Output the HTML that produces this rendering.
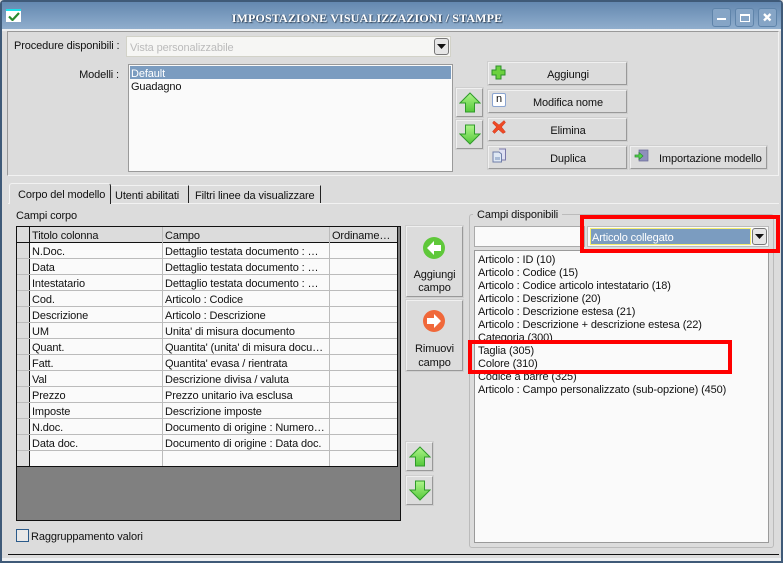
<!DOCTYPE html>
<html><head><meta charset="utf-8"><style>
html,body{margin:0;padding:0;width:783px;height:563px;overflow:hidden;background:#dcdcdc}
*{box-sizing:border-box}
#w{position:absolute;left:0;top:0;width:783px;height:563px;font:11px "Liberation Sans",sans-serif;color:#111;overflow:hidden}
#w div,#w svg{position:absolute}
.t{white-space:nowrap;line-height:13px;letter-spacing:-.12px}
.btn{background:#dcdcdc;border:1px solid;border-color:#f0f0f0 #999 #999 #f0f0f0;box-shadow:0 0 0 1px #cfcfcf}
.c{text-align:center}
.r{text-align:right}
.red{border:4px solid #f00}
.b{padding:6px 0 0 21px}
</style></head><body><div id="w">
<div style="left:0;top:0;width:783px;height:563px;background:#dcdcdc;border:2px solid #3f5a78;border-radius:4px 4px 0 0"></div>
<div style="left:2px;top:2px;width:779px;height:27px;background:linear-gradient(#6488b0,#90aecd)"></div>
<div style="left:2px;top:29px;width:779px;height:2px;background:#eef0f2"></div>
<div style="left:2px;top:558px;width:779px;height:3px;background:#eef0f2"></div>
<div style="left:6px;top:9px;width:15px;height:13px;background:#fff;border-top:2px solid #1ce0e8"></div>
<svg style="left:8px;top:12px" width="12" height="9" viewBox="0 0 12 9"><path d="M1 4.500L4.500 8L11 1" fill="none" stroke="#2a8a30" stroke-width="2.200"/></svg>
<div class="t c" style="left:0;top:11px;width:734px;font:bold 12px 'Liberation Serif',serif;color:#fff;text-shadow:1px 1px 1px #33465c,-1px 0 1px #55708e;letter-spacing:.15px">IMPOSTAZIONE VISUALIZZAZIONI / STAMPE</div>
<div style="left:712px;top:8px;width:19px;height:19px;border:1px solid #5f84aa;background:#86a5c6;border-radius:3px"></div>
<div style="left:735px;top:8px;width:19px;height:19px;border:1px solid #5f84aa;background:#86a5c6;border-radius:3px"></div>
<div style="left:758px;top:8px;width:19px;height:19px;border:1px solid #5f84aa;background:#86a5c6;border-radius:3px"></div>
<div style="left:717px;top:18px;width:9px;height:2px;background:#fff"></div>
<div style="left:740px;top:14px;width:10px;height:8px;border:1px solid #fff;border-top-width:2px"></div>
<svg style="left:762px;top:12px" width="11" height="11" viewBox="0 0 11 11"><path d="M2 2L8.500 8.500M8.500 2L2 8.500" stroke="#fff" stroke-width="2.300"/></svg>

<div style="left:7px;top:31px;width:772px;height:145px;border:1px solid;border-color:#999 #f2f2f2 #f2f2f2 #999"></div>
<div class="t" style="left:14px;top:40px;">Procedure disponibili :</div>
<div style="left:126px;top:36px;width:325px;height:21px;background:#f6f6f4;border:1px solid #d2d2c8"></div>
<div class="t" style="left:130px;top:42px;color:#bbb">Vista personalizzabile</div>
<div style="left:434px;top:38px;width:15px;height:17px;background:#e6e6e6;border:1px solid #777;border-radius:3px"></div>
<svg style="left:437px;top:44px" width="9" height="5"><path d="M0 0H9L4.500 5Z" fill="#111"/></svg>
<div class="t r" style="left:60px;top:69px;width:59px">Modelli :</div>
<div style="left:128px;top:64px;width:325px;height:108px;background:#fafafa;border:1px solid #9a9a9a"></div>
<div style="left:130px;top:66px;width:321px;height:13px;background:#7b9cc0"></div>
<div class="t" style="left:131px;top:68px;color:#fff">Default</div>
<div class="t" style="left:131px;top:81px">Guadagno</div>

<div class="btn" style="left:456px;top:88px;width:27px;height:29px"></div>
<svg style="left:459px;top:92px" width="22" height="22" viewBox="0 0 22 22"><defs><linearGradient id="g" x1="0" y1="0" x2="0" y2="1"><stop offset="0" stop-color="#aef58a"/><stop offset="1" stop-color="#55c83a"/></linearGradient></defs><path d="M11 1L21 11H15.500V20H6.500V11H1Z" fill="url(#g)" stroke="#2f9a2a"/></svg>
<div class="btn" style="left:456px;top:120px;width:27px;height:29px"></div>
<svg style="left:459px;top:123px" width="22" height="22" viewBox="0 0 22 22"><path d="M11 21L21 11H15.500V2H6.500V11H1Z" fill="url(#g)" stroke="#2f9a2a"/></svg>

<div class="btn c t b" style="left:488px;top:62px;width:139px;height:23px">Aggiungi</div>
<svg style="left:491px;top:65px" width="15" height="15" viewBox="0 0 15 15"><path d="M5 1H10V5H14V10H10V14H5V10H1V5H5Z" fill="#6cd13f" stroke="#2d8f2a"/></svg>
<div class="btn c t b" style="left:488px;top:90px;width:139px;height:23px">Modifica nome</div>
<div class="t c" style="left:492px;top:93px;width:14px;height:14px;background:#fff;border:1px solid #8aa4d0;border-radius:2px;font-size:11px;line-height:11px">n</div>
<div class="btn c t b" style="left:488px;top:118px;width:139px;height:23px">Elimina</div>
<svg style="left:492px;top:120px" width="14" height="14" viewBox="0 0 14 14"><path d="M2 1L7 5L12 0.500L13.500 2.500L9.500 7L13.500 12L11 13.500L6.500 9.500L2.500 13.500L0.500 11.500L4.500 7L0.500 3Z" fill="#ee4a25" stroke="#c9331a" stroke-width=".5"/></svg>
<div class="btn c t b" style="left:488px;top:146px;width:139px;height:23px">Duplica</div>
<svg style="left:492px;top:148px" width="15" height="15" viewBox="0 0 15 15"><path d="M7 1H13.500V12H10" fill="#dfe0f2" stroke="#7a78a8"/><path d="M1 4H7L9.500 6V14H1Z" fill="#dfe8f4" stroke="#6f7ea8"/><path d="M3 9H8V12H3Z" fill="#a9bbd6"/></svg>
<div class="btn t" style="left:630px;top:146px;width:137px;height:23px;padding:6px 0 0 28px">Importazione modello</div>
<svg style="left:634px;top:148px" width="15" height="15" viewBox="0 0 15 15"><path d="M5 2H14V13H5Z" fill="#8f90bc" stroke="#6b6c98" stroke-width=".7"/><path d="M1 7H5V4.500L9 8L5 11.500V9H1Z" fill="#55d84a" stroke="#2a8a30" stroke-width=".7"/></svg>

<div style="left:8px;top:203px;width:771px;height:1px;background:#f2f2f2"></div>
<div style="left:9px;top:183px;width:102px;height:21px;background:#dcdcdc;border-right:1px solid #222;border-top:1px solid #f2f2f2;border-left:1px solid #f2f2f2;border-radius:3px 3px 0 0"></div>
<div class="t" style="left:18px;top:189px">Corpo del modello</div>
<div style="left:111px;top:185px;width:78px;height:18px;border-right:1px solid #222;border-top:1px solid #f2f2f2"></div>
<div class="t" style="left:115px;top:190px">Utenti abilitati</div>
<div style="left:189px;top:185px;width:132px;height:18px;border-right:1px solid #222;border-top:1px solid #f2f2f2"></div>
<div class="t" style="left:195px;top:190px">Filtri linee da visualizzare</div>

<div class="t" style="left:16px;top:210px">Campi corpo</div>
<div style="left:16px;top:226px;width:385px;height:295px;background:#808080;border:1px solid #111"></div>
<div style="left:17px;top:227px;width:381px;height:240px;background:#fafafa;border-right:1px solid #111;border-bottom:1px solid #111"></div>
<div style="left:17px;top:227px;width:380px;height:15px;background:#dcdcdc"></div>
<div style="left:17px;top:242px;width:380px;height:1px;background:#111"></div>
<div style="left:17px;top:243px;width:12px;height:223px;background:#dcdcdc"></div>
<div style="left:29px;top:227px;width:1px;height:239px;background:#111"></div>
<div style="left:162px;top:227px;width:1px;height:239px;background:#bbb"></div>
<div style="left:329px;top:227px;width:1px;height:239px;background:#bbb"></div>
<div style="left:17px;top:258px;width:380px;height:1px;background:#bbb"></div>
<div style="left:17px;top:274px;width:380px;height:1px;background:#bbb"></div>
<div style="left:17px;top:290px;width:380px;height:1px;background:#bbb"></div>
<div style="left:17px;top:306px;width:380px;height:1px;background:#bbb"></div>
<div style="left:17px;top:322px;width:380px;height:1px;background:#bbb"></div>
<div style="left:17px;top:338px;width:380px;height:1px;background:#bbb"></div>
<div style="left:17px;top:354px;width:380px;height:1px;background:#bbb"></div>
<div style="left:17px;top:370px;width:380px;height:1px;background:#bbb"></div>
<div style="left:17px;top:386px;width:380px;height:1px;background:#bbb"></div>
<div style="left:17px;top:402px;width:380px;height:1px;background:#bbb"></div>
<div style="left:17px;top:418px;width:380px;height:1px;background:#bbb"></div>
<div style="left:17px;top:434px;width:380px;height:1px;background:#bbb"></div>
<div style="left:17px;top:450px;width:380px;height:1px;background:#bbb"></div>

<div class="t" style="left:32px;top:230px">Titolo colonna</div><div class="t" style="left:165px;top:230px">Campo</div><div class="t" style="left:332px;top:230px">Ordiname…</div>
<div class="t" style="left:32px;top:246px">N.Doc.</div><div class="t" style="left:165px;top:246px">Dettaglio testata documento : …</div>
<div class="t" style="left:32px;top:262px">Data</div><div class="t" style="left:165px;top:262px">Dettaglio testata documento : …</div>
<div class="t" style="left:32px;top:278px">Intestatario</div><div class="t" style="left:165px;top:278px">Dettaglio testata documento : …</div>
<div class="t" style="left:32px;top:294px">Cod.</div><div class="t" style="left:165px;top:294px">Articolo : Codice</div>
<div class="t" style="left:32px;top:310px">Descrizione</div><div class="t" style="left:165px;top:310px">Articolo : Descrizione</div>
<div class="t" style="left:32px;top:326px">UM</div><div class="t" style="left:165px;top:326px">Unita' di misura documento</div>
<div class="t" style="left:32px;top:342px">Quant.</div><div class="t" style="left:165px;top:342px">Quantita' (unita' di misura docu…</div>
<div class="t" style="left:32px;top:358px">Fatt.</div><div class="t" style="left:165px;top:358px">Quantita' evasa / rientrata</div>
<div class="t" style="left:32px;top:374px">Val</div><div class="t" style="left:165px;top:374px">Descrizione divisa / valuta</div>
<div class="t" style="left:32px;top:390px">Prezzo</div><div class="t" style="left:165px;top:390px">Prezzo unitario iva esclusa</div>
<div class="t" style="left:32px;top:406px">Imposte</div><div class="t" style="left:165px;top:406px">Descrizione imposte</div>
<div class="t" style="left:32px;top:422px">N.doc.</div><div class="t" style="left:165px;top:422px">Documento di origine : Numero…</div>
<div class="t" style="left:32px;top:438px">Data doc.</div><div class="t" style="left:165px;top:438px">Documento di origine : Data doc.</div>

<div style="left:16px;top:529px;width:13px;height:13px;background:#e8e8e8;border:1px solid #2a5a8a"></div>
<div class="t" style="left:31px;top:531px">Raggruppamento valori</div>

<div class="btn" style="left:406px;top:226px;width:57px;height:71px"></div>
<svg style="left:422px;top:236px" width="24" height="24" viewBox="0 0 24 24"><circle cx="12" cy="12" r="11" fill="#5fc83a"/><path d="M12 5L5 12L12 19V15H19V9H12Z" fill="#fff"/></svg>
<div class="t c" style="left:406px;top:269px;width:57px">Aggiungi<br>campo</div>
<div class="btn" style="left:406px;top:300px;width:57px;height:71px"></div>
<svg style="left:422px;top:309px" width="24" height="24" viewBox="0 0 24 24"><circle cx="12" cy="12" r="11" fill="#f0683a"/><path d="M12 5L19 12L12 19V15H5V9H12Z" fill="#fff"/></svg>
<div class="t c" style="left:406px;top:342px;width:57px;line-height:14px">Rimuovi<br>campo</div>
<div class="btn" style="left:406px;top:442px;width:27px;height:29px"></div>
<svg style="left:409px;top:446px" width="22" height="22" viewBox="0 0 22 22"><path d="M11 1L21 11H15.500V20H6.500V11H1Z" fill="url(#g)" stroke="#2f9a2a"/></svg>
<div class="btn" style="left:406px;top:476px;width:27px;height:29px"></div>
<svg style="left:409px;top:479px" width="22" height="22" viewBox="0 0 22 22"><path d="M11 21L21 11H15.500V2H6.500V11H1Z" fill="url(#g)" stroke="#2f9a2a"/></svg>

<div style="left:469px;top:214px;width:305px;height:334px;border:1px solid #bbb;border-radius:3px"></div>
<div class="t" style="left:473px;top:209px;padding:0 4px;background:#dcdcdc">Campi disponibili</div>
<div style="left:474px;top:226px;width:111px;height:21px;background:#fafafa;border:1px solid #aaa"></div>
<div style="left:587px;top:226px;width:182px;height:21px;background:#fafafa;border:1px solid #bbb"></div>
<div style="left:590px;top:228px;width:161px;height:17px;background:#7b9cc0;border:1px solid #f4ee70"></div>
<div class="t" style="left:592px;top:232px;color:#fff">Articolo collegato</div>
<div style="left:752px;top:228px;width:15px;height:17px;background:#e6e6e6;border:1px solid #777;border-radius:3px"></div>
<svg style="left:755px;top:234px" width="9" height="5"><path d="M0 0H9L4.500 5Z" fill="#111"/></svg>
<div style="left:474px;top:250px;width:295px;height:293px;background:#fafafa;border:1px solid #9a9a9a"></div>
<div class="t" style="left:478px;top:254px">Articolo : ID (10)</div>
<div class="t" style="left:478px;top:267px">Articolo : Codice (15)</div>
<div class="t" style="left:478px;top:280px">Articolo : Codice articolo intestatario (18)</div>
<div class="t" style="left:478px;top:293px">Articolo : Descrizione (20)</div>
<div class="t" style="left:478px;top:306px">Articolo : Descrizione estesa (21)</div>
<div class="t" style="left:478px;top:319px">Articolo : Descrizione + descrizione estesa (22)</div>
<div class="t" style="left:478px;top:332px">Categoria (300)</div>
<div class="t" style="left:478px;top:345px">Taglia (305)</div>
<div class="t" style="left:478px;top:358px">Colore (310)</div>
<div class="t" style="left:478px;top:371px">Codice a barre (325)</div>
<div class="t" style="left:478px;top:384px">Articolo : Campo personalizzato (sub-opzione) (450)</div>

<div class="red" style="left:580px;top:215px;width:200px;height:38px"></div>
<div class="red" style="left:468px;top:340px;width:264px;height:34px"></div>
<div style="left:8px;top:554px;width:771px;height:1px;background:#111"></div>
</div></body></html>
